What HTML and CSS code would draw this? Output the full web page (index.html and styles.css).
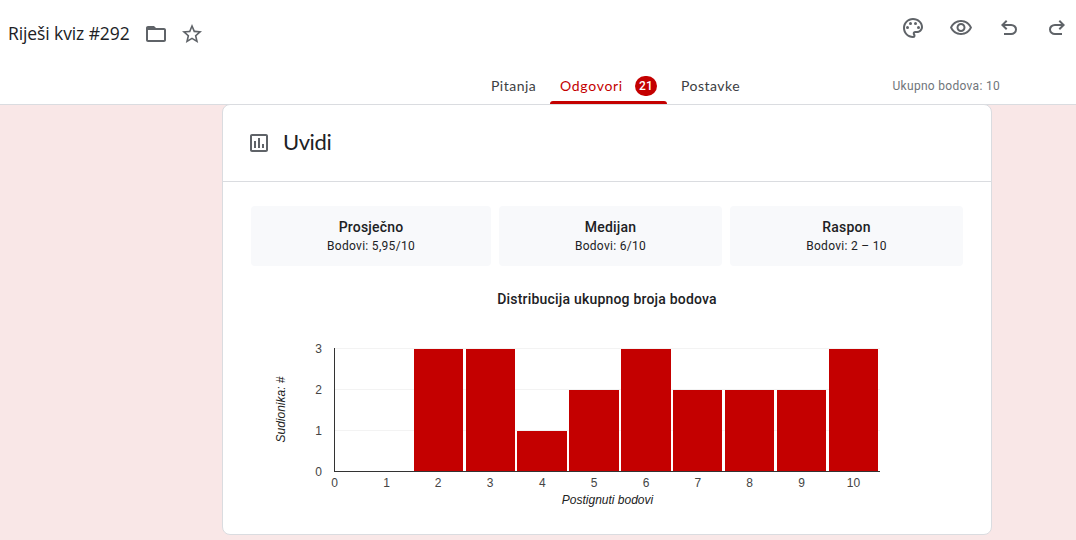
FILE: index.html
```html
<!DOCTYPE html>
<html lang="hr">
<head>
  <meta charset="UTF-8">
  <meta name="viewport" content="width=device-width, initial-scale=1.0">
  <title>Riješi kviz #292</title>
  <link rel="stylesheet" href="styles.css">
</head>
<body>
  <header class="header">
    <div class="topbar">
      <h1 class="title">Riješi kviz #292</h1>
      <svg class="icon folder" viewBox="0 0 24 24"><path d="M9.17 6l2 2H20v10H4V6h5.17M10 4H4c-1.1 0-1.99.9-1.99 2L2 18c0 1.1.9 2 2 2h16c1.1 0 2-.9 2-2V8c0-1.1-.9-2-2-2h-8l-2-2z"/><path d="M4 5h6l2 3H4z"/></svg>
      <svg class="icon star" viewBox="0 0 24 24"><path d="M22 9.24l-7.19-.62L12 2 9.19 8.63 2 9.24l5.46 4.73L5.82 21 12 17.27 18.18 21l-1.63-7.03L22 9.24zM12 15.4l-3.76 2.27 1-4.28-3.32-2.88 4.38-.38L12 6.1l1.71 4.04 4.38.38-3.32 2.88 1 4.28L12 15.4z"/></svg>
      <div class="tools">
        <svg class="icon" viewBox="0 0 24 24"><path d="M12 22C6.49 22 2 17.51 2 12S6.49 2 12 2s10 4.04 10 9c0 3.31-2.69 6-6 6h-1.77c-.28 0-.5.22-.5.5 0 .12.05.23.13.33.41.47.64 1.06.64 1.67A2.5 2.5 0 0 1 12 22zm0-18c-4.41 0-8 3.59-8 8s3.59 8 8 8c.28 0 .5-.22.5-.5a.54.54 0 0 0-.14-.35c-.41-.46-.63-1.05-.63-1.65a2.5 2.5 0 0 1 2.5-2.5H16c2.21 0 4-1.79 4-4 0-3.86-3.59-7-8-7z"/><circle cx="6.5" cy="11.5" r="1.5"/><circle cx="9.5" cy="7.5" r="1.5"/><circle cx="14.5" cy="7.5" r="1.5"/><circle cx="17.5" cy="11.5" r="1.5"/></svg>
        <svg class="icon" viewBox="0 0 24 24"><path d="M12 6c3.79 0 7.17 2.13 8.82 5.5C19.17 14.87 15.79 17 12 17s-7.17-2.13-8.82-5.5C4.83 8.13 8.21 6 12 6m0-2C7 4 2.73 7.11 1 11.5 2.73 15.89 7 19 12 19s9.27-3.11 11-7.5C21.27 7.11 17 4 12 4zm0 5c1.38 0 2.5 1.12 2.5 2.5S13.38 14 12 14s-2.5-1.12-2.5-2.5S10.62 9 12 9m0-2c-2.48 0-4.5 2.02-4.5 4.5S9.52 16 12 16s4.5-2.02 4.5-4.5S14.48 7 12 7z"/></svg>
        <svg class="icon" viewBox="0 -960 960 960"><path d="M280-200v-80h284q63 0 109.500-40T720-420q0-60-46.500-100T564-560H312l104 104-56 56-200-200 200-200 56 56-104 104h252q97 0 169.500 63T800-420q0 94-72.500 157T564-200H280Z"/></svg>
        <svg class="icon" viewBox="0 -960 960 960"><path d="M680-200v-80H396q-63 0-109.500-40T240-420q0-60 46.500-100T396-560h252L544-456l56 56 200-200-200-200-56 56 104 104H396q-97 0-169.500 63T160-420q0 94 72.500 157T396-200h284Z"/></svg>
      </div>
    </div>
    <nav class="tabs">
      <div class="tab">Pitanja</div>
      <div class="tab active">Odgovori <span class="badge">21</span></div>
      <div class="tab">Postavke</div>
      <div class="points">Ukupno bodova: 10</div>
    </nav>
  </header>

  <main class="card">
    <div class="card-header">
      <svg class="icon" viewBox="0 0 24 24"><path d="M19 3H5c-1.100 0-2 .9-2 2v14c0 1.100.9 2 2 2h14c1.100 0 2-.9 2-2V5c0-1.100-.9-2-2-2zm0 16H5V5h14v14zM7 10h2v7H7zM11 7h2v10h-2zM15 13h2v4h-2z"/></svg>
      <h2>Uvidi</h2>
    </div>
    <div class="stats">
      <div class="stat"><strong>Prosječno</strong><span>Bodovi: 5,95/10</span></div>
      <div class="stat"><strong>Medijan</strong><span>Bodovi: 6/10</span></div>
      <div class="stat"><strong>Raspon</strong><span>Bodovi: 2 – 10</span></div>
    </div>
    <h3 class="chart-title">Distribucija ukupnog broja bodova</h3>
    <svg class="chart" width="640" height="180" viewBox="0 0 640 180">
      <g class="grid">
        <rect x="75" y="18" width="545" height="1"/>
        <rect x="75" y="59" width="545" height="1"/>
        <rect x="75" y="100" width="545" height="1"/>
      </g>
      <g class="bars">
        <rect x="154" y="19" width="49" height="122"/>
        <rect x="206" y="19" width="49" height="122"/>
        <rect x="257" y="101" width="50" height="40"/>
        <rect x="309" y="60" width="50" height="81"/>
        <rect x="361" y="19" width="50" height="122"/>
        <rect x="413" y="60" width="49" height="81"/>
        <rect x="465" y="60" width="49" height="81"/>
        <rect x="517" y="60" width="49" height="81"/>
        <rect x="569" y="19" width="49" height="122"/>
      </g>
      <g class="axis">
        <rect x="74" y="18" width="1" height="124"/>
        <rect x="74" y="141" width="546" height="1"/>
      </g>
      <g class="labels-y">
        <text x="62" y="23">3</text>
        <text x="62" y="64">2</text>
        <text x="62" y="105">1</text>
        <text x="62" y="146">0</text>
      </g>
      <g class="labels-x">
        <text x="74.500" y="157">0</text>
        <text x="126.500" y="157">1</text>
        <text x="178" y="157">2</text>
        <text x="230" y="157">3</text>
        <text x="282.300" y="157">4</text>
        <text x="334.200" y="157">5</text>
        <text x="386" y="157">6</text>
        <text x="437.800" y="157">7</text>
        <text x="489.700" y="157">8</text>
        <text x="541.600" y="157">9</text>
        <text x="593.500" y="157">10</text>
      </g>
      <text class="axis-title" x="347.500" y="174">Postignuti bodovi</text>
      <text class="axis-title" transform="translate(25 79.500) rotate(-90)">Sudionika: #</text>
    </svg>
  </main>
</body>
</html>
```
FILE: styles.css
```css
* {
  box-sizing: border-box;
}
body {
  margin: 0;
  height: 540px;
  overflow: hidden;
  background-color: #f9e7e7;
  font-family: Roboto, Arial, sans-serif;
  color: #202124;
}
h1, h2, h3 {
  margin: 0;
  font-weight: 400;
}
.header {
  height: 105px;
  background-color: white;
  border-bottom: 1px solid #dadce0;
}
.topbar {
  display: flex;
  align-items: center;
  height: 68px;
  padding-left: 8px;
}
.title {
  width: 122px;
  padding-bottom: 2px;
  font-family: "Open Sans", sans-serif;
  font-size: 17.5px;
  letter-spacing: -0.1px;
  white-space: nowrap;
}
.icon {
  display: block;
  flex: none;
  width: 24px;
  height: 24px;
  fill: #5f6368;
}
.folder {
  margin-left: 14px;
}
.star {
  margin-left: 12px;
}
.tools {
  display: flex;
  gap: 24px;
  margin-left: auto;
  margin-right: 7px;
  padding-bottom: 12px;
}
.tabs {
  display: flex;
  height: 36px;
  padding-left: 482px;
  font-family: Lato, sans-serif;
  font-size: 14px;
  line-height: 36px;
  letter-spacing: 0.5px;
}
.tab {
  position: relative;
  width: 63px;
  padding-left: 9px;
  color: #3c4043;
}
.tab.active {
  display: flex;
  align-items: center;
  justify-content: space-between;
  width: 127px;
  padding: 0 15px;
  color: #c40000;
  letter-spacing: 0.7px;
}
.tab.active::after {
  content: "";
  position: absolute;
  left: 5px;
  bottom: 0;
  width: 117px;
  height: 3px;
  border-radius: 3px 3px 0 0;
  background-color: #c40000;
}
.badge {
  width: 22px;
  height: 20px;
  border-radius: 10px;
  background-color: #c40000;
  color: white;
  font-family: Roboto, sans-serif;
  font-size: 12px;
  font-weight: 500;
  line-height: 20px;
  letter-spacing: 0.3px;
  text-align: center;
}
.points {
  margin-left: auto;
  margin-right: 76px;
  color: #70757a;
  font-family: Roboto, sans-serif;
  font-size: 12px;
  letter-spacing: 0.3px;
}
.card {
  width: 770px;
  height: 431px;
  margin: -1px 0 0 222px;
  border: 1px solid #dadce0;
  border-radius: 8px;
  background-color: white;
}
.card-header {
  display: flex;
  align-items: center;
  height: 77px;
  padding-left: 24px;
  border-bottom: 1px solid #dadce0;
}
.card-header h2 {
  margin-left: 12px;
  padding-bottom: 3px;
  font-family: Lato, sans-serif;
  font-size: 22px;
  letter-spacing: -0.4px;
}
.stats {
  display: grid;
  grid-template-columns: 240px 223px 233px;
  gap: 8px;
  margin: 24px 28px 0;
}
.stat {
  height: 60px;
  padding-top: 11px;
  border-radius: 4px;
  background-color: #f8f9fb;
  text-align: center;
}
.stat strong, .stat span {
  display: block;
}
.stat strong {
  font-size: 14px;
  font-weight: 500;
  line-height: 20px;
  letter-spacing: 0.2px;
}
.stat span {
  font-size: 12px;
  line-height: 18px;
  letter-spacing: 0.3px;
}
.chart-title {
  margin-top: 23px;
  font-size: 14px;
  font-weight: 500;
  line-height: 20px;
  letter-spacing: 0.2px;
  text-align: center;
}
.chart {
  display: block;
  margin: 21px 0 0 37px;
  font-family: "Liberation Sans", Arial, sans-serif;
  font-size: 12px;
}
.grid {
  fill: #f3f3f3;
}
.bars {
  fill: #c40000;
}
.axis {
  fill: #333;
}
.labels-x, .labels-y {
  fill: #444;
  text-anchor: middle;
}
.labels-y {
  text-anchor: end;
}
.axis-title {
  fill: #222;
  font-style: italic;
  text-anchor: middle;
}
```
